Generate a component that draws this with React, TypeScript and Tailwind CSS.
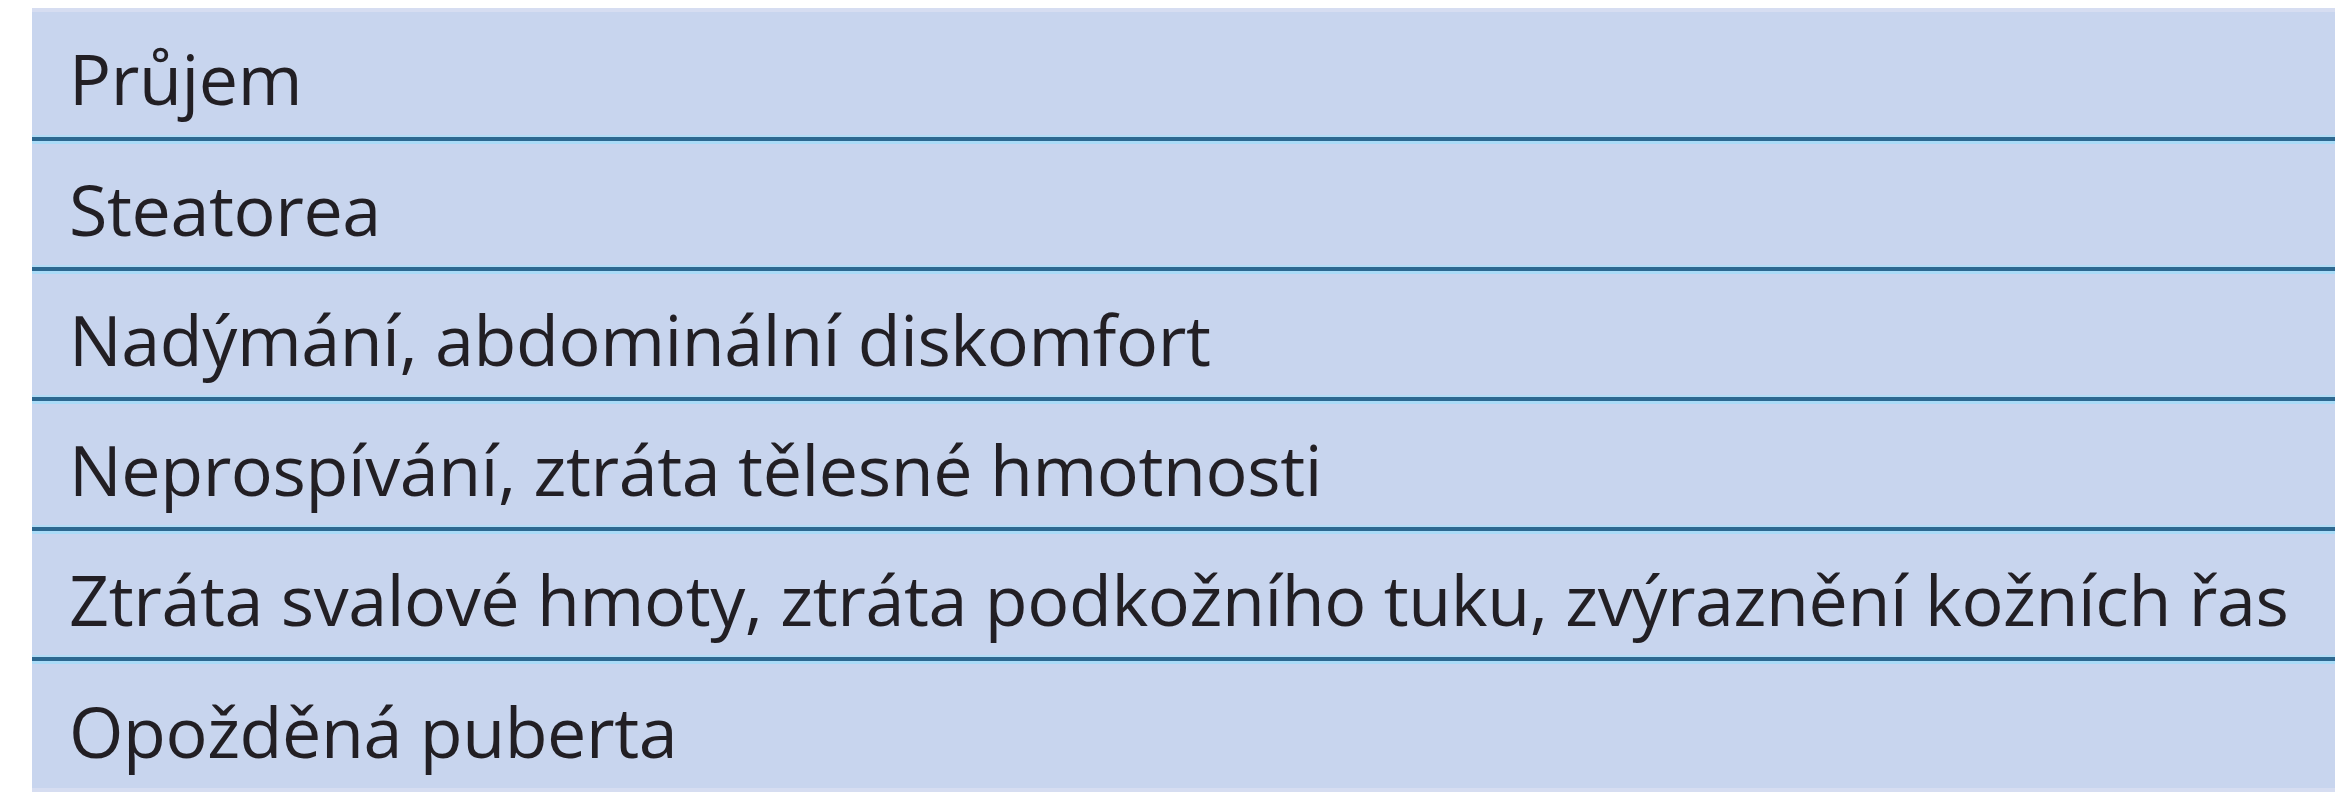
const rows = [
  "Průjem",
  "Steatorea",
  "Nadýmání, abdominální diskomfort",
  "Neprospívání, ztráta tělesné hmotnosti",
  "Ztráta svalové hmoty, ztráta podkožního tuku, zvýraznění kožních řas",
  "Opožděná puberta",
];

function Separator() {
  return (
    <div className="flex flex-col">
      <div className="h-[2px] bg-[#b3dcf5]" />
      <div className="h-[4px] bg-[#2d6890]" />
      <div className="h-[3px] bg-[#a9dbf7]" />
    </div>
  );
}

export default function App() {
  return (
    <div className="w-[2335px] h-[800px] bg-white pt-[8px] pl-[32px]">
      <div className="flex flex-col bg-[#c8d5ee] font-['Open_Sans',sans-serif] text-[#221f24]">
        <div className="h-[4px] bg-[#d6ddf1]" />
        {rows.map((text, i) => (
          <div key={text} className="flex flex-col">
            <div
              className={
                i === 0
                  ? "h-[123px] flex items-center pl-[37px]"
                  : i === rows.length - 1
                    ? "h-[124px] flex items-center pl-[37px]"
                    : "h-[121px] flex items-center pl-[37px]"
              }
            >
              <span className="text-[70px] leading-none tracking-[-0.4px] pt-[9px] whitespace-nowrap">
                {text}
              </span>
            </div>
            {i < rows.length - 1 && <Separator />}
          </div>
        ))}
        <div className="h-[4px] bg-[#d6ddf1]" />
      </div>
    </div>
  );
}
